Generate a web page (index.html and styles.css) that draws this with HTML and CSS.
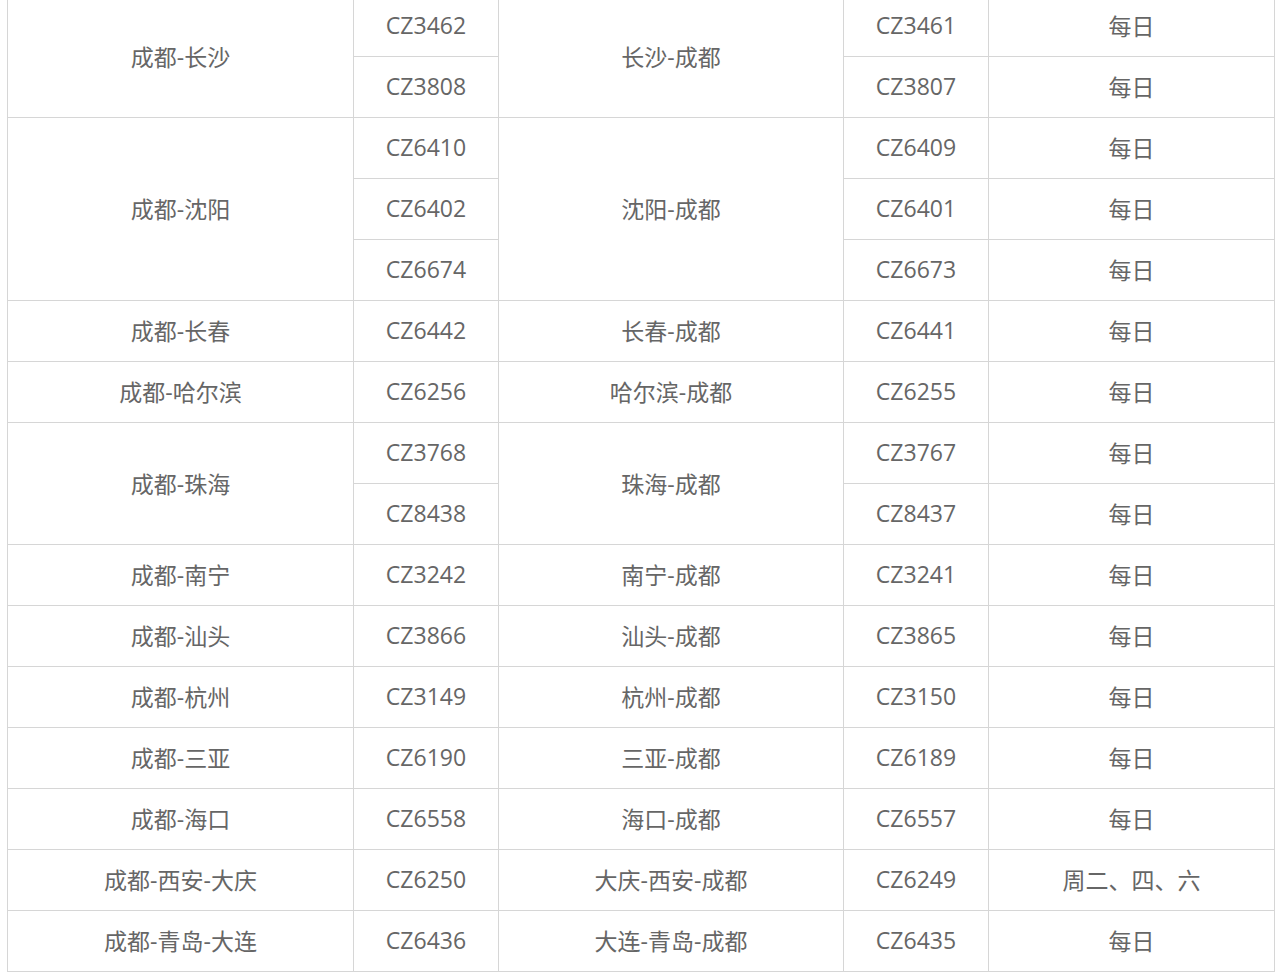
FILE: index.html
```html
<!DOCTYPE html>
<html>
<head>
  <meta charset="utf-8" />
  <title>成都始发航线</title>
  <link rel="stylesheet" href="styles.css">
</head>
<body>
<div id="wrap">
<table class="routes">
  <colgroup>
    <col class="c-route first" /><col class="c-flight" /><col class="c-route" /><col class="c-flight" /><col class="c-days" />
  </colgroup>
  <tr><td rowspan="2">成都-长沙</td><td>CZ3462</td><td rowspan="2">长沙-成都</td><td>CZ3461</td><td>每日</td></tr>
  <tr><td>CZ3808</td><td>CZ3807</td><td>每日</td></tr>
  <tr><td rowspan="3">成都-沈阳</td><td>CZ6410</td><td rowspan="3">沈阳-成都</td><td>CZ6409</td><td>每日</td></tr>
  <tr><td>CZ6402</td><td>CZ6401</td><td>每日</td></tr>
  <tr><td>CZ6674</td><td>CZ6673</td><td>每日</td></tr>
  <tr><td>成都-长春</td><td>CZ6442</td><td>长春-成都</td><td>CZ6441</td><td>每日</td></tr>
  <tr><td>成都-哈尔滨</td><td>CZ6256</td><td>哈尔滨-成都</td><td>CZ6255</td><td>每日</td></tr>
  <tr><td rowspan="2">成都-珠海</td><td>CZ3768</td><td rowspan="2">珠海-成都</td><td>CZ3767</td><td>每日</td></tr>
  <tr><td>CZ8438</td><td>CZ8437</td><td>每日</td></tr>
  <tr><td>成都-南宁</td><td>CZ3242</td><td>南宁-成都</td><td>CZ3241</td><td>每日</td></tr>
  <tr><td>成都-汕头</td><td>CZ3866</td><td>汕头-成都</td><td>CZ3865</td><td>每日</td></tr>
  <tr><td>成都-杭州</td><td>CZ3149</td><td>杭州-成都</td><td>CZ3150</td><td>每日</td></tr>
  <tr><td>成都-三亚</td><td>CZ6190</td><td>三亚-成都</td><td>CZ6189</td><td>每日</td></tr>
  <tr><td>成都-海口</td><td>CZ6558</td><td>海口-成都</td><td>CZ6557</td><td>每日</td></tr>
  <tr><td>成都-西安-大庆</td><td>CZ6250</td><td>大庆-西安-成都</td><td>CZ6249</td><td>周二、四、六</td></tr>
  <tr><td>成都-青岛-大连</td><td>CZ6436</td><td>大连-青岛-成都</td><td>CZ6435</td><td>每日</td></tr>
</table>
</div>
</body>
</html>
```

FILE: styles.css
```css
body {
  margin: 0;
  background: #fff;
  font-family: "Open Sans", "Noto Sans CJK SC", sans-serif;
}
#wrap {
  margin: -5px 4px 0 7px;
}
.routes {
  width: 100%;
  border-collapse: collapse;
  table-layout: fixed;
  color: #666;
  font-size: 23px;
}
.routes td {
  border: 1px solid #d6d6d6;
  height: 58px;
  padding: 0 0 2px;
  text-align: center;
  vertical-align: middle;
}
.c-route {
  width: 345px;
}
.c-route.first {
  width: 346px;
}
.c-flight {
  width: 145px;
}
.c-days {
  width: auto;
}
```
